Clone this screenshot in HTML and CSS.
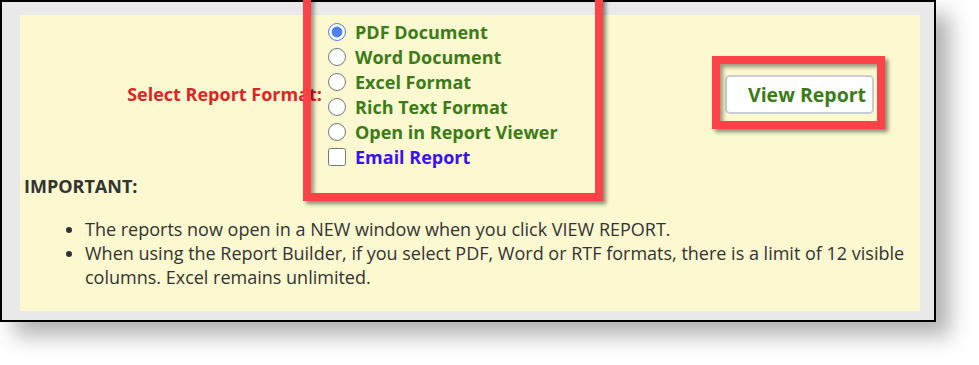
FILE: index.html
```html
<!DOCTYPE html>
<html lang="en">
<head>
  <meta charset="UTF-8" />
  <meta name="viewport" content="width=device-width, initial-scale=1" />
  <title>Report Format</title>
  <link rel="stylesheet" href="styles.css">
</head>
<body>

  <!-- REPORT FRAME -->
  <div class="frame">
    <div class="panel">

      <div class="format-row">
        <div class="format-label">Select Report Format:</div>

        <div class="format-options">
          <label class="opt"><input type="radio" name="fmt" checked>PDF Document</label>
          <label class="opt"><input type="radio" name="fmt">Word Document</label>
          <label class="opt"><input type="radio" name="fmt">Excel Format</label>
          <label class="opt"><input type="radio" name="fmt">Rich Text Format</label>
          <label class="opt"><input type="radio" name="fmt">Open in Report Viewer</label>
          <label class="opt email"><input type="checkbox" name="email">Email Report</label>
        </div>

        <div class="format-action">
          <button type="button" class="view-btn">View Report</button>
        </div>
      </div>

      <h4 class="important">IMPORTANT:</h4>
      <ul class="notes">
        <li>The reports now open in a NEW window when you click VIEW REPORT.</li>
        <li>When using the Report Builder, if you select PDF, Word or RTF formats, there is a limit of 12 visible columns. Excel remains unlimited.</li>
      </ul>
    </div>

    <!-- annotation boxes -->
    <div class="callout callout-options"></div>
    <div class="callout callout-button"></div>
  </div>

</body>
</html>
```

FILE: styles.css
```css
/* RESET */
* {
  margin: 0;
  padding: 0;
  box-sizing: border-box;
}

html, body {
  width: 100%;
  height: 100%;
  overflow: hidden;
  background: #fff;
  font-family: 'Open Sans', sans-serif;
}

.frame {
  position: relative;
  width: 936px;
  height: 322px;
  border: 2px solid #000;
  background: #e9e9e9;
  padding: 13px 14px 9px 18px;
  box-shadow: 14px 14px 20px rgba(0, 0, 0, 0.3);
}

.panel {
  height: 100%;
  background: #fcf8cf;
  padding: 4px 4px 0 4px;
  color: #333;
}

/* format selector row */
.format-row {
  display: flex;
  align-items: center;
}

.format-label {
  width: 298px;
  text-align: right;
  color: #dc2626;
  font-weight: bold;
  font-size: 18px;
}

.format-options {
  width: 397px;
  margin-left: 6px;
  display: flex;
  flex-direction: column;
}

.opt {
  display: flex;
  align-items: center;
  height: 25px;
  font-size: 18px;
  font-weight: bold;
  color: #3c7b19;
}

.opt input {
  width: 18px;
  height: 18px;
  margin: 0 9px 0 0;
  accent-color: #4d7ef2;
}

.opt.email {
  color: #3a12f2;
}

.view-btn {
  width: 149px;
  height: 39px;
  background: #fff;
  border: 2px solid #c6cdd6;
  border-radius: 5px;
  padding: 0 4px 0 21px;
  text-align: left;
  white-space: nowrap;
  font-family: 'Open Sans', sans-serif;
  font-size: 19.5px;
  font-weight: bold;
  color: #3c7b19;
  cursor: pointer;
}

/* notes */
.important {
  margin-top: 6px;
  font-size: 18px;
  line-height: 22px;
  font-weight: bold;
}

.notes {
  margin-top: 20px;
  padding-left: 61px;
  font-size: 18px;
  line-height: 24px;
}

/* red annotation boxes */
.callout {
  position: absolute;
  border: 8px solid #fd4347;
  box-shadow: 3px 3px 4px rgba(0, 0, 0, 0.45), inset 3px 3px 4px rgba(0, 0, 0, 0.4);
  pointer-events: none;
}

.callout-options {
  left: 301px;
  top: -14px;
  width: 300px;
  height: 213px;
}

.callout-button {
  left: 710px;
  top: 54px;
  width: 173px;
  height: 73px;
}
```
